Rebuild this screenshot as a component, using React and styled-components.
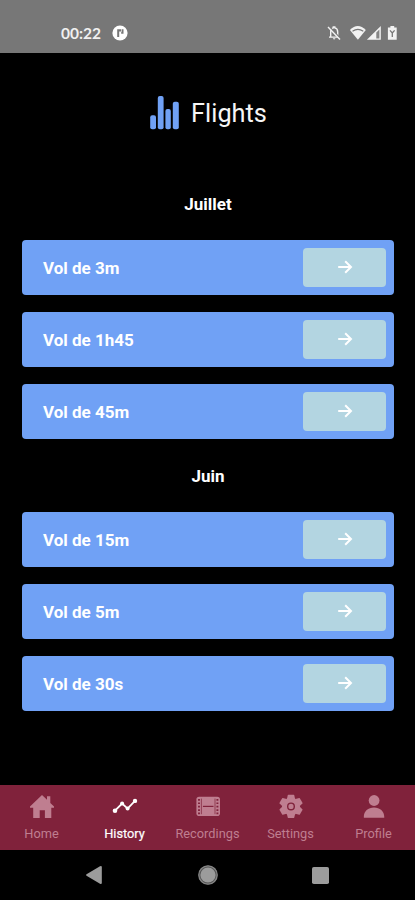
import React from 'react';
import styled, { createGlobalStyle, ThemeProvider } from 'styled-components';

const theme = {
  colors: {
    background: '#000',
    statusBar: '#777',
    card: '#70a1f5',
    button: '#b3d5e1',
    tabBar: '#80223b',
    tabInactive: '#bf7e90',
    white: '#fff',
    system: '#9c9c9c',
  },
  font: "Roboto, 'Noto Sans', sans-serif",
};

const GlobalStyle = createGlobalStyle`
  * {
    box-sizing: border-box;
  }

  body {
    margin: 0;
    background: #000;
  }

  svg {
    display: block;
    flex: none;
  }
`;

const Screen = styled.div`
  display: flex;
  flex-direction: column;
  width: 415px;
  height: 900px;
  overflow: hidden;
  background: ${props => props.theme.colors.background};
  color: ${props => props.theme.colors.white};
  font-family: ${props => props.theme.font};
`;

const StatusBar = styled.header`
  display: flex;
  align-items: center;
  flex: none;
  height: 53px;
  padding: 13px 16px 0 61px;
  background: ${props => props.theme.colors.statusBar};
`;

const Clock = styled.span`
  width: 51px;
  font-family: Lato, sans-serif;
  font-size: 15.5px;
  font-weight: 700;
  line-height: 20px;
  color: #f0f0f0;
`;

const StatusIcons = styled.div`
  display: flex;
  margin-left: auto;
`;

const Content = styled.main`
  flex: 1;
  padding: 0 21px 0 22px;
`;

const Heading = styled.div`
  display: flex;
  align-items: center;
  justify-content: center;
  gap: 12px;
  height: 119px;
  padding-left: 1px;
`;

const Title = styled.h1`
  margin: 0;
  padding-top: 2px;
  font-size: 25.3px;
  font-weight: 400;
  line-height: 30px;
  color: #f6f6f6;
`;

const Month = styled.h2`
  margin: 0;
  padding-top: ${props => props.$top}px;
  height: ${props => props.$height}px;
  font-size: 17px;
  font-weight: 700;
  line-height: 20px;
  text-align: center;
`;

const FlightList = styled.div`
  display: flex;
  flex-direction: column;
  gap: 17px;
`;

const FlightCard = styled.div`
  display: flex;
  align-items: center;
  justify-content: space-between;
  height: 55px;
  padding: 0 8px 0 21px;
  border-radius: 4px;
  background: ${props => props.theme.colors.card};
`;

const FlightName = styled.span`
  font-size: 17px;
  font-weight: 700;
  line-height: 20px;
`;

const OpenButton = styled.button`
  display: flex;
  align-items: center;
  justify-content: center;
  width: 83px;
  height: 39px;
  padding: 0 0 1px;
  border: 0;
  border-radius: 4px;
  background: ${props => props.theme.colors.button};
`;

const TabBar = styled.nav`
  display: grid;
  grid-template-columns: repeat(5, 1fr);
  flex: none;
  height: 65px;
  background: ${props => props.theme.colors.tabBar};
`;

const Tab = styled.a`
  display: flex;
  flex-direction: column;
  align-items: center;
  gap: 7px;
  padding-top: 8px;
  color: ${props => (props.$active ? props.theme.colors.white : props.theme.colors.tabInactive)};
`;

const TabLabel = styled.span`
  font-size: 12.8px;
  line-height: 16px;
  -webkit-text-stroke: ${props => (props.$active ? '0.2px' : '0')};
`;

const SystemBar = styled.footer`
  display: flex;
  align-items: center;
  justify-content: space-between;
  flex: none;
  height: 50px;
  padding: 0 86px 0 85px;
  color: ${props => props.theme.colors.system};
`;

const AppBadge = () => (
  <svg width="16" height="16" viewBox="0 0 16 16">
    <circle cx="8" cy="8" r="7.6" fill="#fff" />
    <path d="M5.2 12V4.2H9v2.2H7.2V12z" fill="#777" />
    <path d="M9.6 4.2h1.9v4.6H9.2V6.9h.4z" fill="#777" />
  </svg>
);

const SystemStatus = () => (
  <svg width="72" height="18" viewBox="0 0 72 18" fill="#f2f2f2">
    <path d="M3.7 13V8.1c0-2.5 1-3.8 2.6-4.2V3h1.5v.9C9.6 4.3 10.7 5.8 10.7 8v5M2 13.1h10" fill="none" stroke="#f2f2f2" strokeWidth="1.4" />
    <path d="M5.9 14.2h2.5c-.2 1.6-2.3 1.6-2.5 0z" />
    <path d="M2.6 2.8l11 12" stroke="#777" strokeWidth="1.4" />
    <path d="M1 3l12 12.6" stroke="#f2f2f2" strokeWidth="1.4" />
    <path d="M22.9 6Q30.8-1.8 38.8 6L30.9 15.8z" />
    <path d="M25.5 7.2q5.4-3.6 10.8 0" fill="none" stroke="#777" strokeWidth="1.1" />
    <path d="M39.9 15.8L53.8 2v13.8z" />
    <path d="M49.3 8.5l3.1-3.1v9h-3.1z" fill="#858585" />
    <path d="M60.9 3.6h2.5V2h3.8v1.6h2.5v12.2h-8.8z" />
    <path d="M63 6.4l2.3 2.6 2.3-2.6M65.3 9v4" fill="none" stroke="#777" strokeWidth="1.3" />
  </svg>
);

const BarsIcon = () => (
  <svg width="29" height="34" viewBox="0 0 29 34" fill="#70a1f5">
    <rect x="0.2" y="19.2" width="5.8" height="14" rx="2" />
    <rect x="7.8" y="0" width="5.8" height="33.2" rx="2" />
    <rect x="15.4" y="13" width="5.4" height="20.2" rx="2" />
    <rect x="22.8" y="5.7" width="6" height="27.5" rx="2" />
  </svg>
);

const ArrowIcon = () => (
  <svg width="16" height="16" viewBox="0 0 16 16" fill="none" stroke="#fff" strokeWidth="2">
    <path d="M1.2 8h12.4M8.2 2.2l5.8 5.8-5.8 5.8" />
  </svg>
);

const HomeIcon = () => (
  <svg width="26" height="26" viewBox="0 0 26 26" fill="currentColor">
    <path d="M13 2l5 4.8V3.2h3.3v6.7l3.7 3.5v1.3h-2.7V25h-6.4v-7.7h-5.2V25H4.2V14.7H1v-1.3z" />
  </svg>
);

const HistoryIcon = () => (
  <svg width="26" height="26" viewBox="0 0 26 26" fill="currentColor">
    <path d="M3 17.7l7.1-7.2 5.5 5.1 7.4-7.8" fill="none" stroke="currentColor" strokeWidth="1.8" />
    <circle cx="3" cy="17.7" r="2.3" />
    <circle cx="10.1" cy="10.5" r="2" />
    <circle cx="15.6" cy="15.6" r="2" />
    <circle cx="23" cy="7.9" r="2.2" />
  </svg>
);

const FilmIcon = () => (
  <svg width="26" height="26" viewBox="0 0 26 26" fill="currentColor">
    <rect x="1.4" y="3.8" width="23.6" height="19.2" rx="2.8" />
    <g fill="none" stroke="#80223b">
      <path d="M7.9 13.4h10.6" strokeWidth="1.2" />
      <path d="M6.4 5.6v15.6M20 5.6v15.6" strokeWidth="0.7" />
      <path d="M4 6v15.2M22.4 6v15.2" strokeWidth="1.9" strokeDasharray="1.7 1.7" />
    </g>
  </svg>
);

const GearIcon = () => (
  <svg width="26" height="26" viewBox="0 0 26 26">
    <g fill="currentColor" transform="translate(13 13.4)">
      <circle r="9" />
      {[0, 60, 120, 180, 240, 300].map(angle => (
        <path key={angle} d="M-4.1-7.5L-3.2-11.3Q-3-11.7-2.6-11.7H2.6Q3-11.7 3.2-11.3L4.1-7.5z" transform={`rotate(${angle})`} />
      ))}
    </g>
    <circle cx="13" cy="13.4" r="3.3" fill="none" stroke="#80223b" strokeWidth="1.4" />
  </svg>
);

const ProfileIcon = () => (
  <svg width="26" height="26" viewBox="0 0 26 26" fill="currentColor">
    <circle cx="13.1" cy="7.5" r="5.4" />
    <path d="M2.8 24.2C2.8 18 7.2 14.5 13 14.5s10.3 3.5 10.3 9.7q0 .6-.6.6H3.4q-.6 0-.6-.6z" />
  </svg>
);

const months = [
  { name: 'Juillet', top: 22, height: 68, flights: ['3m', '1h45', '45m'] },
  { name: 'Juin', top: 27, height: 73, flights: ['15m', '5m', '30s'] },
];

const tabs = [
  { label: 'Home', icon: HomeIcon },
  { label: 'History', icon: HistoryIcon, active: true },
  { label: 'Recordings', icon: FilmIcon },
  { label: 'Settings', icon: GearIcon },
  { label: 'Profile', icon: ProfileIcon },
];

const App = () => {
  return (
    <ThemeProvider theme={theme}>
      <GlobalStyle />
      <Screen>
        <StatusBar>
          <Clock>00:22</Clock>
          <AppBadge />
          <StatusIcons>
            <SystemStatus />
          </StatusIcons>
        </StatusBar>
        <Content>
          <Heading>
            <BarsIcon />
            <Title>Flights</Title>
          </Heading>
          {months.map(month => (
            <section key={month.name}>
              <Month $top={month.top} $height={month.height}>{month.name}</Month>
              <FlightList>
                {month.flights.map(duration => (
                  <FlightCard key={duration}>
                    <FlightName>Vol de {duration}</FlightName>
                    <OpenButton aria-label="Open flight">
                      <ArrowIcon />
                    </OpenButton>
                  </FlightCard>
                ))}
              </FlightList>
            </section>
          ))}
        </Content>
        <TabBar>
          {tabs.map(({ label, icon: Icon, active }) => (
            <Tab key={label} $active={active}>
              <Icon />
              <TabLabel $active={active}>{label}</TabLabel>
            </Tab>
          ))}
        </TabBar>
        <SystemBar>
          <svg width="18" height="20" viewBox="0 0 18 20" fill="currentColor">
            <path d="M1.5 9.2L15 1.2q1.8-.8 1.8.9v15.8q0 1.6-1.8.9L1.5 10.8q-1-.8 0-1.6z" />
          </svg>
          <svg width="22" height="22" viewBox="0 0 22 22">
            <circle cx="11" cy="11" r="9.5" fill="#555" />
            <circle cx="11" cy="11" r="9.2" fill="none" stroke="#858585" strokeWidth="1.3" />
            <circle cx="11" cy="11" r="7.6" fill="currentColor" />
          </svg>
          <svg width="17" height="17" viewBox="0 0 17 17" fill="currentColor">
            <rect width="17" height="17" rx="1.8" />
          </svg>
        </SystemBar>
      </Screen>
    </ThemeProvider>
  );
};

export default App;
